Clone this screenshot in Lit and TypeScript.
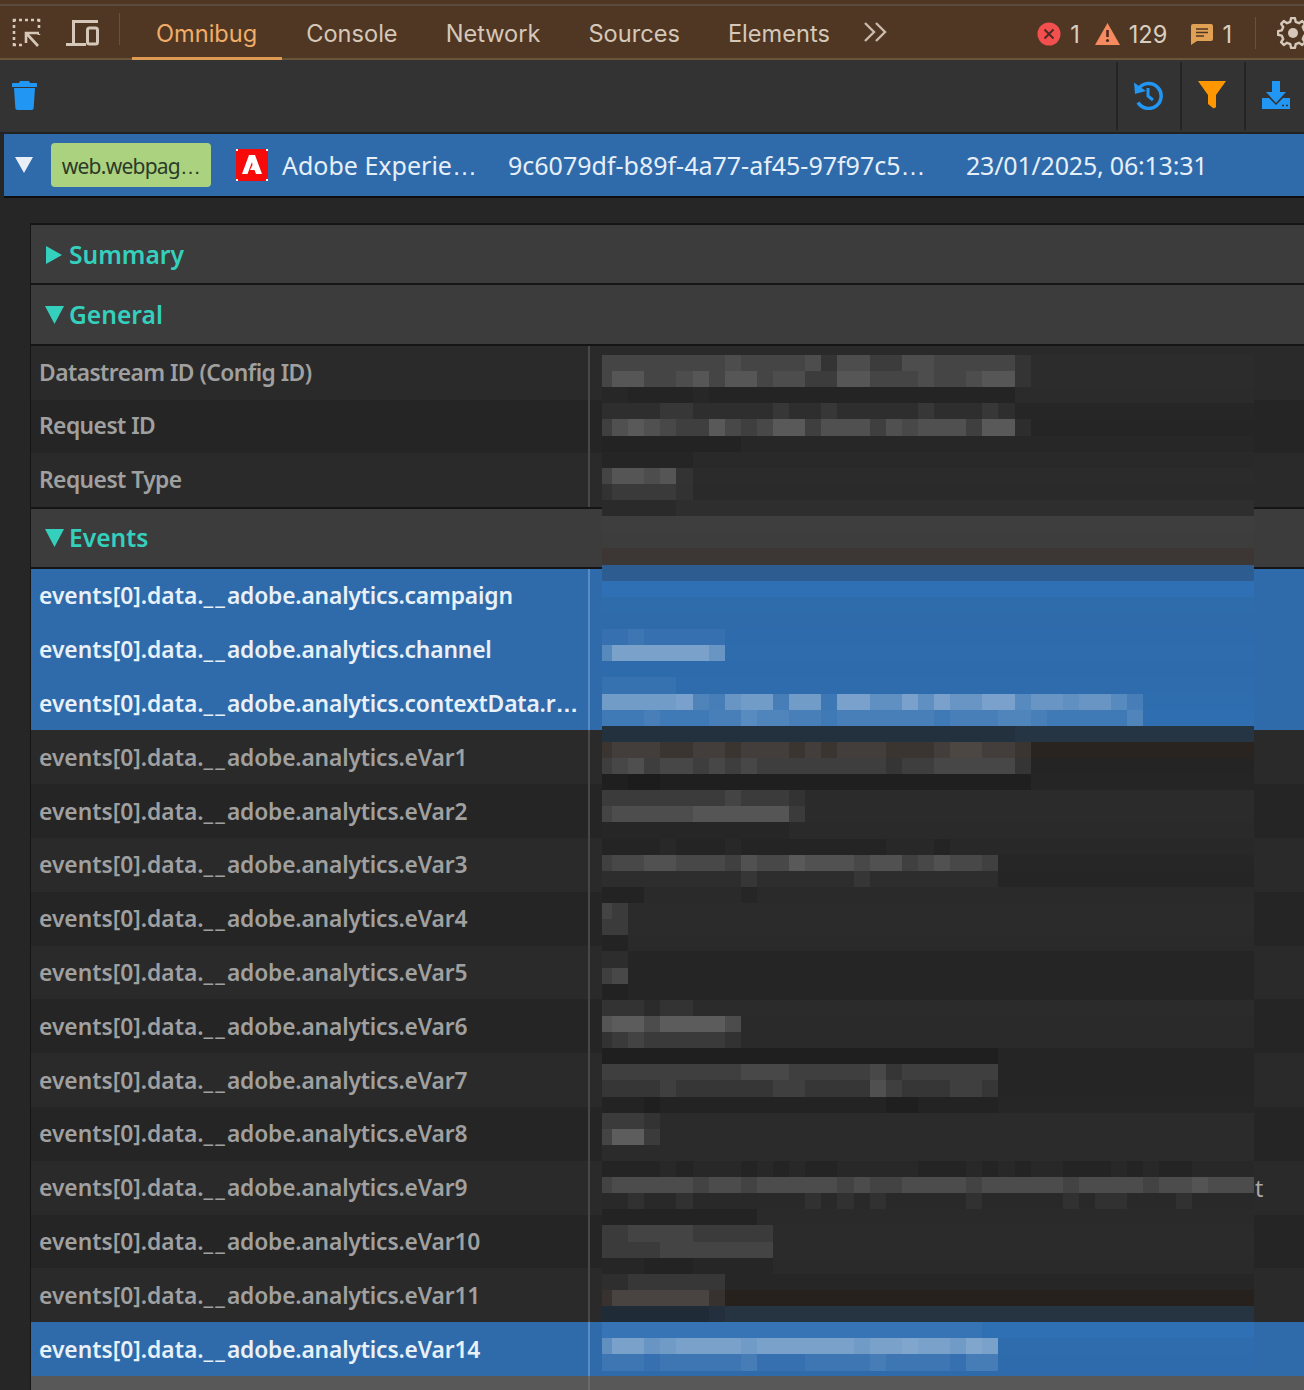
import { LitElement, html, css, svg } from "lit";
import { customElement } from "lit/decorators.js";

const R = (bg: string, s = ""): [string, string] => [bg, s];
const MOSAIC: [string, string][] = [
  R("#2c2c2c", "333333334333341442244333331"),
  R("#2c2c2c", "355334535534422553334334551"),
  R("#2b2b2b", "zzyyyyzyyyyyyyyyyyyyyyyyyy"),
  R("#262626", "11112211111211211111211121"),
  R("#252525", "356543364346635553545553661"),
  R("#272727", "zzzzzzzzz"),
  R("#292929", "zzzzzz"),
  R("#2b2b2b", "355451"),
  R("#2a2a2a", "122221"),
  R("#2e2e2e", "zzzzz"),
  R("#3e3e3e"),
  R("#3c3d3c"),
  R("#3c3735"),
  R("#2d5c90"),
  R("#2f6fb3"),
  R("#2f6cac"),
  R("#2f6bab"),
  R("#2e6bad", "11211111"),
  R("#2e6cad", "59999997"),
  R("#2e6bac"),
  R("#2e6cad", "11111"),
  R("#2e6dae", "8888894378838829966969779957767753"),
  R("#2f6eb0", "2223222335443323333332333443222224"),
  R("#263544", "zzzzzzzzzzzzzzzzzzzzzzzzzz"),
  R("#2a2420", "233322332333232333222344332"),
  R("#242424", "345344343433333333233444442"),
  R("#252525", "yyxxyyyyyyyyyyyyyyyyyyyyyyy"),
  R("#2b2b2b", "2222222232221"),
  R("#2b2b2b", "3444445555552"),
  R("#2a2a2a", "zzzzzzzzzzzz"),
  R("#282828", "zzzz.zzz.zzzzzzzzz...z"),
  R("#262626", "3445544435446555455345443"),
  R("#252525", "1111111112111111211111111"),
  R("#2a2a2a", "yyy......z"),
  R("#2b2b2b", "32"),
  R("#2b2b2b", "22"),
  R("#2a2a2a", "yy"),
  R("#252525", "11"),
  R("#252525", "34"),
  R("#252525", "zz"),
  R("#2b2b2b", "111.11"),
  R("#2a2a2a", "566466664"),
  R("#2a2a2a", "123222221"),
  R("#252525", "yyyyyyyyyyyyyyyyyyyyyyyyy"),
  R("#252525", "3333333334443333342333333"),
  R("#252525", "2222322222233222253222332"),
  R("#262626", "zzzyzzzzzzzzzzzzzzyyzzzzz"),
  R("#2b2b2b", "2221"),
  R("#2b2b2b", "3662"),
  R("#2b2b2b"),
  R("#282828", "zzzz.z...z.z.zz.....zzz.z.z..zzz.z.zz"),
  R("#2a2a2a", "344444344344444343344443444443444434454443"),
  R("#292929", "..1..1.......1.1.1.....1.....1.11...1"),
  R("#2a2a2a", "yyyyyyyyyy"),
  R("#2b2b2b", "22333322222"),
  R("#2b2b2b", "22223333333"),
  R("#2a2a2a", "zzzyyyzzzzz"),
  R("#262626", "11222222"),
  R("#27211e", "24444442"),
  R("#263442", "yyyyyyyz"),
  R("#2f6fb3", "111111111111111111111111"),
  R("#2e6cad", "6997899998999999899a998a9"),
  R("#2e6bad", "2221222223111222232222133"),
];

function mosaicCells() {
  const stepX = 16.1;
  const stepY = 16.12;
  const cells: unknown[] = [];
  MOSAIC.forEach(([bg, s], r) => {
    const y = r * stepY;
    cells.push(svg`<rect x="0" y=${y} width="652" height=${stepY + 0.4} fill=${bg}></rect>`);
    [...s].forEach((c, i) => {
      let fill = "";
      if (c >= "1" && c <= "9") fill = `rgba(255,255,255,${+c * 0.04})`;
      else if (c === "a") fill = "rgba(255,255,255,.4)";
      else if (c === "x") fill = "rgba(0,0,0,.24)";
      else if (c === "y") fill = "rgba(0,0,0,.16)";
      else if (c === "z") fill = "rgba(0,0,0,.08)";
      if (!fill) return;
      const x = i === 0 ? 0 : 10 + (i - 1) * stepX;
      const w = i === 0 ? 10 : stepX;
      cells.push(svg`<rect x=${x} y=${y} width=${w} height=${stepY} fill=${fill}></rect>`);
    });
  });
  return cells;
}

function gearPath(cx: number, cy: number, ro: number, ri: number, n: number) {
  const pts: string[] = [];
  for (let i = 0; i < n; i++) {
    const a = (i / n) * Math.PI * 2;
    const d = (Math.PI * 2) / n;
    [[-0.3, ri], [-0.16, ro], [0.16, ro], [0.3, ri]].forEach(([o, rad]) => {
      const t = a + o * d;
      pts.push(`${(cx + Math.cos(t) * rad).toFixed(1)} ${(cy + Math.sin(t) * rad).toFixed(1)}`);
    });
  }
  return "M" + pts.join("L") + "Z";
}

const general = ["Datastream ID (Config ID)", "Request ID", "Request Type"];
const events = [
  { t: "campaign", s: 1 },
  { t: "channel", s: 1 },
  { t: "contextData.r", s: 1, ell: 1 },
  { t: "eVar1" },
  { t: "eVar2" },
  { t: "eVar3" },
  { t: "eVar4" },
  { t: "eVar5" },
  { t: "eVar6" },
  { t: "eVar7" },
  { t: "eVar8" },
  { t: "eVar9", tail: "t" },
  { t: "eVar10" },
  { t: "eVar11" },
  { t: "eVar14", s: 1 },
];

@customElement("app-root")
export class AppRoot extends LitElement {
  static styles = css`
    :host { display: block; width: 1304px; height: 1390px; overflow: hidden; background: #262626; position: relative; font-family: "Noto Sans", sans-serif; }
    svg { display: block; flex: none; }
    .ell { font-family: "Liberation Sans", sans-serif; }

    .top { height: 60px; box-sizing: border-box; background: #4f3724; border-bottom: 2px solid #6a543a; display: flex; align-items: stretch; position: relative; font-family: Inter, sans-serif; }
    .top::before { content: ""; position: absolute; left: 0; right: 0; top: 4px; height: 2px; background: #5b4a3e; }
    .sep { width: 1px; height: 32px; background: #6b5235; align-self: center; flex: none; }
    .tools { display: flex; align-items: center; width: 119px; padding-left: 12px; box-sizing: border-box; gap: 24px; flex: none; padding-top: 8px; }
    .tabs { display: flex; margin-left: 12px; }
    .tab { padding: 4px 24px 0; display: flex; align-items: center; font-size: 23.6px; color: #d5c8b9; margin-bottom: -2px; border-bottom: 3px solid transparent; box-sizing: border-box; height: 54px; margin-top: 6px; }
    .tab.active { color: #f0ad68; border-bottom-color: #dd9a50; padding-right: 25px; }
    .more { margin-left: 9px; align-self: center; padding-top: 6px; }
    .counts { margin-left: auto; display: flex; align-items: center; padding-top: 10px; font-size: 23.6px; color: #d8cec2; }
    .counts span { margin-left: 9px; }
    .counts .w { margin-left: 15px; display: flex; align-items: center; }
    .counts .m { margin-left: 24px; display: flex; align-items: center; }
    .gearbox { display: flex; align-items: center; padding-top: 8px; margin-left: 23px; width: 49px; flex: none; gap: 21px; }

    .bar2 { height: 72px; background: #333; display: flex; align-items: stretch; border-bottom: 2px solid #222; box-sizing: content-box; }
    .trash { align-self: center; margin: 0 0 2px 12px; }
    .btns { margin-left: auto; margin-right: -4px; display: flex; padding: 2px 0; }
    .btn { width: 64px; border-left: 2px solid #242424; box-sizing: border-box; display: flex; align-items: center; justify-content: center; padding: 0 2px 2px 0; }

    .req { height: 62px; margin-left: 4px; background: #2f6bab; border-bottom: 2px solid #0e0e0e; display: flex; align-items: center; color: #e6eff8; font-size: 25px; }
    .tri { margin-left: 11px; }
    .badge { margin-left: 18px; width: 160px; height: 44px; padding-top: 1px; box-sizing: border-box; border-radius: 4px; background: #abd37f; color: #2b3a29; font-size: 21px; letter-spacing: -0.75px; display: flex; align-items: center; justify-content: center; white-space: pre; }
    .logo { margin-left: 25px; }
    .prov { margin-left: 14px; width: 226px; }
    .id { width: 458px; }
    .date { letter-spacing: -0.2px; }

    .panel { margin: 25px 0 0 30px; border-left: 1px solid #151515; border-top: 2px solid #151515; }
    .head { height: 58px; background: #3c3c3c; border-bottom: 2px solid #151515; display: flex; align-items: center; padding-left: 14px; color: #35d0bd; font-weight: 600; gap: 5px; }
    .head.tall { height: 59px; }
    .head.first { height: 56px; padding-top: 2px; }
    .head em { font-style: normal; font-size: 24.6px; margin-bottom: 1px; }
    .arrow { width: 19px; }
    .row { height: 53.8px; display: flex; background: #2a2a2a; align-items: stretch; }
    .row.alt { background: #252525; }
    .row.sel { background: #2f6bab; }
    .gen .row { height: 53.67px; }
    .gen .lab { padding-bottom: 1px; }
    .gen .lab b { letter-spacing: -0.55px; }
    .lab { width: 559px; flex: none; box-sizing: border-box; border-right: 2px solid #484848; padding: 0 0 0 8px; display: flex; align-items: center; }
    .lab b { display: block; font-weight: 600; font-size: 22.8px; color: #a0a0a0; white-space: nowrap; }
    .sel .lab b { color: #e8f0f8; }
    .sel .lab { border-right-color: #5a8cc4; }
    .us { letter-spacing: 2px; }
    .rest { letter-spacing: -0.17px; }
    .gen-end { height: 2px; background: #151515; }
    .val { flex: 1; display: flex; align-items: center; font-size: 23px; color: #a8a8a8; padding-left: 665px; }
    .tailbottom { height: 20px; background: #585858; }
    .tailbottom .lab { height: 100%; border-right-color: #6a6a6a; }

    .mosaic { position: absolute; left: 602px; top: 355.3px; }
  `;

  render() {
    const tc = "#d5c8b9";
    return html`
      <div class="top">
        <div class="tools">
          <svg width="30" height="30" viewBox="0 0 30 30" fill="none" stroke=${tc}>
            <path d="M2 4V2H4M7 2h3M13 2h3M19 2h3M25 2h2v2M27 7v3M2 7v3M2 13v3M2 19v3M2 25v2h2M7 27h3M24 15h3M27 16v1" stroke-width="2.6"></path>
            <path d="M26 28 L15 16 M14 25 V15 H24" stroke-width="2.6"></path>
          </svg>
          <svg width="33" height="26" viewBox="0 0 33 26" fill="none" stroke=${tc} stroke-width="3">
            <path d="M0 24.5H20M7.5 24V1.5H32"></path>
            <rect x="21.5" y="8" width="10" height="16" rx="2"></rect>
          </svg>
        </div>
        <div class="sep"></div>
        <div class="tabs">
          <div class="tab active">Omnibug</div>
          <div class="tab">Console</div>
          <div class="tab">Network</div>
          <div class="tab">Sources</div>
          <div class="tab">Elements</div>
        </div>
        <div class="more">
          <svg width="26" height="22" viewBox="0 0 26 22" fill="none" stroke="#c9bbab" stroke-width="2.4"><path d="M2 2l9 9-9 9M13 2l9 9-9 9"></path></svg>
        </div>
        <div class="counts">
          <svg width="24" height="24" viewBox="0 0 24 24"><circle cx="12" cy="12" r="11.5" fill="#f44f4f"></circle><path d="M7.5 7.5l9 9M16.5 7.5l-9 9" stroke="#4f2a25" stroke-width="2"></path></svg>
          <span>1</span>
          <div class="w">
            <svg width="25" height="22" viewBox="0 0 25 22"><path d="M12.5 0L25 22H0Z" fill="#f58b5e"></path><path d="M12.5 7v7" stroke="#4f2a25" stroke-width="2.6"></path><circle cx="12.5" cy="17.5" r="1.6" fill="#4f2a25"></circle></svg>
            <span>129</span>
          </div>
          <div class="m">
            <svg width="22" height="21" viewBox="0 0 22 21"><path d="M2 0H20a2 2 0 0 1 2 2V15a2 2 0 0 1-2 2H6L0 21V2a2 2 0 0 1 2-2Z" fill="#e0a155"></path><path d="M5 5h12M5 8.5h12M5 12h8" stroke="#4f3724" stroke-width="1.6"></path></svg>
            <span>1</span>
          </div>
        </div>
        <div class="gearbox">
          <div class="sep"></div>
          <svg width="32" height="32" viewBox="0 0 32 32" fill="none"><path d=${gearPath(16, 16, 15, 11.5, 8)} stroke=${tc} stroke-width="2.4" stroke-linejoin="round"></path><circle cx="16" cy="16" r="5" fill=${tc}></circle></svg>
        </div>
      </div>

      <div class="bar2">
        <svg class="trash" width="25" height="29" viewBox="0 0 25 29"><path d="M8 0H17L18 2H24a1 1 0 0 1 1 1V6H0V3a1 1 0 0 1 1-1H7Z" fill="#2196f3"></path><path d="M2 7H23L21.7 26.500a2.500 2.500 0 0 1-2.500 2.500H5.800a2.500 2.500 0 0 1-2.500-2.500Z" fill="#2196f3"></path></svg>
        <div class="btns">
          <div class="btn">
            <svg width="30" height="30" viewBox="0 0 30 30" fill="none" stroke="#2196f3"><path d="M6 8A12.500 12.500 0 1 1 5 22.500" stroke-width="3.500"></path><path d="M1 2.500L2 14L13 11Z" fill="#2196f3" stroke="none"></path><path d="M15 8V16L20 20" stroke-width="3"></path></svg>
          </div>
          <div class="btn">
            <svg width="28" height="28" viewBox="0 0 28 28"><path d="M0 0H28L18 14V26Q16 28 15 27L10 23V14Z" fill="#ff9800"></path></svg>
          </div>
          <div class="btn">
            <svg width="28" height="28" viewBox="0 0 28 28"><path d="M10 0H18V11H24L14 22L4 11H10Z" fill="#2196f3"></path><path d="M0 17H7L14 24L21 17H28V28H0Z" fill="#2196f3"></path><path d="M20 24.500h2M24 24.500h2" stroke="#333" stroke-width="1.600"></path></svg>
          </div>
        </div>
      </div>

      <div class="req">
        <svg class="tri" width="18" height="16" viewBox="0 0 18 16"><path d="M0 0H18L9 16Z" fill="#e8eef6"></path></svg>
        <div class="badge"><span>web.webpag<span class="ell">…</span></span></div>
        <svg class="logo" width="32" height="32" viewBox="0 0 32 32"><rect width="32" height="32" fill="#f60a0a"></rect><path d="M0 0h2v2H0ZM30 0h2v2h-2ZM0 30h2v2H0ZM30 30h2v2h-2Z" fill="#fff"></path><path d="M13 6H19L26 25H20L18.500 21H14L16.500 16L16 13L11.500 25H6Z" fill="#fff"></path></svg>
        <div class="prov">Adobe Experie<span class="ell">…</span></div>
        <div class="id">9c6079df-b89f-4a77-af45-97f97c5<span class="ell">…</span></div>
        <div class="date">23/01/2025, 06:13:31</div>
      </div>

      <div class="panel">
        <div class="head first"><svg class="arrow" width="19" height="20" viewBox="0 0 19 20"><path d="M1 1L17 10L1 19Z" fill="#35d0bd"></path></svg><em>Summary</em></div>
        <div class="head tall"><svg class="arrow" width="19" height="18" viewBox="0 0 19 18"><path d="M0 0H19L9.500 18Z" fill="#35d0bd"></path></svg><em>General</em></div>
        <div class="gen">
          ${general.map((g, i) => html`<div class="row ${i % 2 ? "alt" : ""}"><div class="lab"><b>${g}</b></div></div>`)}
        </div>
        <div class="gen-end"></div>
        <div class="head"><svg class="arrow" width="19" height="18" viewBox="0 0 19 18"><path d="M0 0H19L9.500 18Z" fill="#35d0bd"></path></svg><em>Events</em></div>
        ${events.map((e, i) => html`<div class="row ${e.s ? "sel" : i % 2 ? "" : "alt"}"><div class="lab"><b>events[0].data.<span class="us">__</span><span class="rest">adobe.analytics.${e.t}</span>${e.ell ? html`<span class="ell">…</span>` : ""}</b></div>${e.tail ? html`<div class="val">${e.tail}</div>` : ""}</div>`)}
        <div class="row tailbottom"><div class="lab"></div></div>
      </div>

      <svg class="mosaic" width="652" height="1016" viewBox="0 0 652 1016" shape-rendering="crispEdges">${mosaicCells()}</svg>
    `;
  }
}
